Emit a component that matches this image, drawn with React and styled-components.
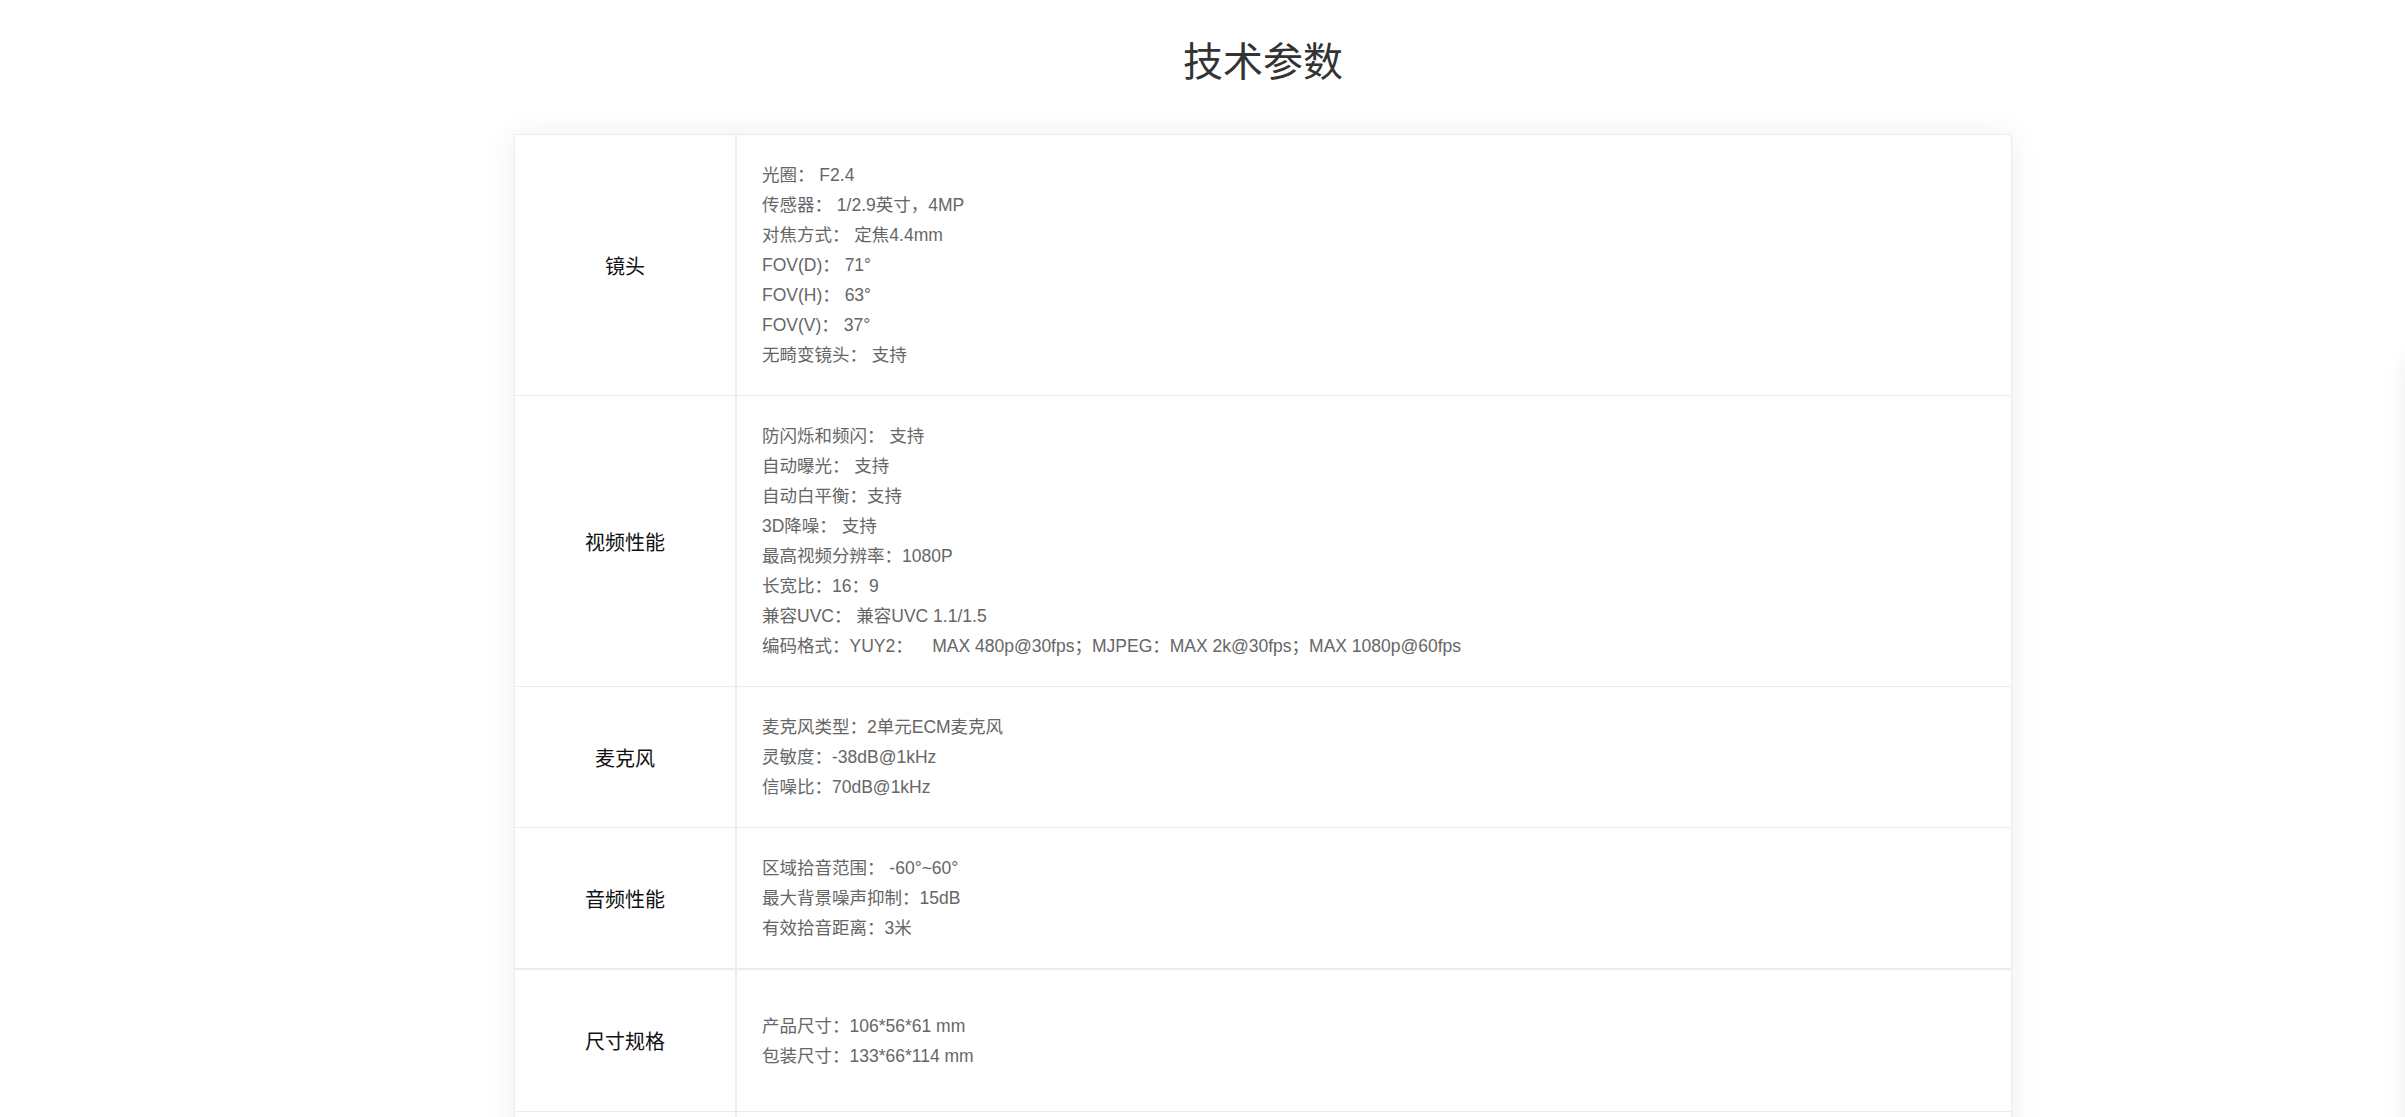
import React from "react";
import styled, { createGlobalStyle } from "styled-components";

const GlobalStyle = createGlobalStyle`
  html, body {
    margin: 0;
    padding: 0;
    background: #ffffff;
    font-family: "Liberation Sans", Arial, "Noto Sans CJK SC", sans-serif;
  }
  * {
    box-sizing: border-box;
  }
`;

const specs = [
  {
    title: "镜头",
    items: [
      "光圈： F2.4",
      "传感器： 1/2.9英寸，4MP",
      "对焦方式： 定焦4.4mm",
      "FOV(D)： 71°",
      "FOV(H)： 63°",
      "FOV(V)： 37°",
      "无畸变镜头： 支持",
    ],
  },
  {
    title: "视频性能",
    items: [
      "防闪烁和频闪： 支持",
      "自动曝光： 支持",
      "自动白平衡：支持",
      "3D降噪： 支持",
      "最高视频分辨率：1080P",
      "长宽比：16：9",
      "兼容UVC： 兼容UVC 1.1/1.5",
      "编码格式：YUY2：\u00a0\u00a0\u00a0 MAX 480p@30fps；MJPEG：MAX 2k@30fps；MAX 1080p@60fps",
    ],
  },
  {
    title: "麦克风",
    items: ["麦克风类型：2单元ECM麦克风", "灵敏度：-38dB@1kHz", "信噪比：70dB@1kHz"],
  },
  {
    title: "音频性能",
    items: ["区域拾音范围： -60°~60°", "最大背景噪声抑制：15dB", "有效拾音距离：3米"],
  },
  {
    title: "尺寸规格",
    items: ["产品尺寸：106*56*61 mm", "包装尺寸：133*66*114 mm"],
    thick: true,
  },
  // next row runs past the bottom of the window
  { title: "", items: [] },
];

export default function App() {
  return (
    <>
      <GlobalStyle />
      <Page>
        <Heading>技术参数</Heading>
        <SpecTable>
          {specs.map((row, i) => (
            <Row key={i} $thick={row.thick}>
              <Label>{row.title}</Label>
              <Values>
                {row.items.map((item) => (
                  <Line key={item}>{item}</Line>
                ))}
              </Values>
            </Row>
          ))}
        </SpecTable>
      </Page>
      <SideDock />
    </>
  );
}

const Page = styled.main`
  min-height: 100vh;
  padding-left: 121px;
  display: flex;
  flex-direction: column;
  align-items: center;
`;

const Heading = styled.h1`
  margin: 29px 0 0;
  font-size: 40px;
  line-height: 60px;
  font-weight: 400;
  color: #333333;
  font-family: "Noto Sans CJK SC", "Liberation Sans", sans-serif;
`;

const SpecTable = styled.section`
  margin-top: 45px;
  width: 1498px;
  background: #ffffff;
  border: 1px solid #ececec;
  border-top: none;
  box-shadow: 0 0 30px rgba(0, 0, 0, 0.07);
`;

const Row = styled.div`
  display: grid;
  grid-template-columns: 222px 1fr;
  min-height: ${(p) => (p.$thick ? 143 : 141)}px;
  border-top: ${(p) => (p.$thick ? "2px" : "1px")} solid #ececec;
`;

const Label = styled.div`
  display: flex;
  align-items: center;
  justify-content: center;
  border-right: 2px solid #ececec;
  font-size: 20px;
  color: #111111;
  font-family: "Noto Sans CJK SC", "Liberation Sans", sans-serif;
`;

const Values = styled.div`
  display: flex;
  flex-direction: column;
  justify-content: center;
  padding: 25px 24px 25px 25px;
`;

const Line = styled.div`
  font-size: 17.5px;
  line-height: 30px;
  color: #666666;
  white-space: pre;
`;

const SideDock = styled.div`
  position: fixed;
  top: 360px;
  right: -70px;
  width: 70px;
  height: 900px;
  border-radius: 10px;
  background: #ffffff;
  box-shadow: 0 0 24px rgba(0, 0, 0, 0.08);
`;
